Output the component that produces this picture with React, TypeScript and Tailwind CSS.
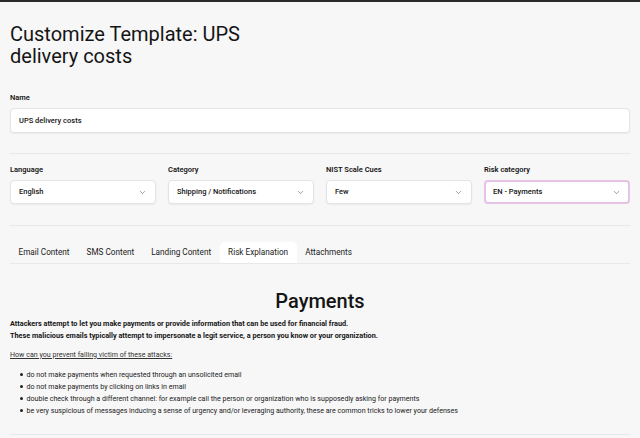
import { ChevronDown } from "lucide-react";

const selects = [
  { label: "Language", value: "English" },
  { label: "Category", value: "Shipping / Notifications" },
  { label: "NIST Scale Cues", value: "Few" },
  { label: "Risk category", value: "EN - Payments", focused: true },
];

const tabs = ["Email Content", "SMS Content", "Landing Content", "Risk Explanation", "Attachments"];

const tips = [
  "do not make payments when requested through an unsolicited email",
  "do not make payments by clicking on links in email",
  "double check through a different channel: for example call the person or organization who is supposedly asking for payments",
  "be very suspicious of messages inducing a sense of urgency and/or leveraging authority, these are common tricks to lower your defenses",
];

export default function App() {
  return (
    <div
      className="min-h-screen bg-[#f7f7f7] border-t-2 border-[#2a2a2a] px-[10px] text-[#151515]"
      style={{ fontFamily: "Roboto, 'Noto Sans', sans-serif" }}
    >
      {/* Header */}
      <h1 className="pt-[21px] w-[260px] text-[20px] leading-[22px] font-normal">
        Customize Template: UPS delivery costs
      </h1>

      {/* Name */}
      <div className="mt-[25px]">
        <label className="block text-[7.5px] leading-[11px] font-semibold mb-[5px]">Name</label>
        <div className="h-[25px] bg-white rounded-[4px] border border-[#e4e4e7] shadow-[0_1px_2px_rgba(0,0,0,0.06)] flex items-center px-[8px] text-[7.5px] font-medium">
          UPS delivery costs
        </div>
      </div>

      <div className="mt-[20px] border-t border-[#e8e8e8]" />

      {/* Selects */}
      <div className="mt-[10px] grid grid-cols-4 gap-[12px]">
        {selects.map((s) => (
          <div key={s.label}>
            <label className="block text-[7.5px] leading-[11px] font-semibold mb-[5px]">{s.label}</label>
            <div
              className={
                s.focused
                  ? "h-[24px] bg-white rounded-[4px] border-2 border-[#e6c3e6] flex items-center justify-between px-[7px] text-[7.5px] font-medium"
                  : "h-[24px] bg-white rounded-[4px] border border-[#e4e4e7] shadow-[0_1px_2px_rgba(0,0,0,0.06)] flex items-center justify-between px-[8px] text-[7.5px] font-medium"
              }
            >
              <span>{s.value}</span>
              <ChevronDown size={9} strokeWidth={1.5} className="text-[#555]" />
            </div>
          </div>
        ))}
      </div>

      <div className="mt-[21px] border-t border-[#e8e8e8]" />

      {/* Tabs */}
      <div className="mt-[16px] flex border-b border-[#e8e8e8] text-[8.2px] text-[#222]">
        {tabs.map((t) => (
          <div
            key={t}
            className={
              t === "Risk Explanation"
                ? "h-[21px] px-[8.5px] flex items-center bg-white rounded-t-[5px]"
                : "h-[21px] px-[8.5px] flex items-center"
            }
          >
            {t}
          </div>
        ))}
      </div>

      {/* Risk explanation */}
      <h2 className="mt-[25px] text-center text-[20px] leading-[24px] font-medium">Payments</h2>
      <div className="mt-[4.5px] text-[7.3px] font-bold leading-[12px]">
        <p>Attackers attempt to let you make payments or provide information that can be used for financial fraud.</p>
        <p>These malicious emails typically attempt to impersonate a legit service, a person you know or your organization.</p>
      </div>
      <p className="mt-[7px] text-[7.1px] underline leading-[12px] text-[#333]">How can you prevent falling victim of these attacks:</p>
      <ul className="mt-[8px] pl-[10px] text-[7.1px] leading-[12px] text-[#222]">
        {tips.map((t) => (
          <li key={t} className="flex items-center">
            <span className="w-[2.5px] h-[2.5px] rounded-full bg-[#222] mr-[4px]" />
            <span>{t}</span>
          </li>
        ))}
      </ul>

      <div className="mt-[17px] border-t border-[#e8e8e8]" />
    </div>
  );
}
